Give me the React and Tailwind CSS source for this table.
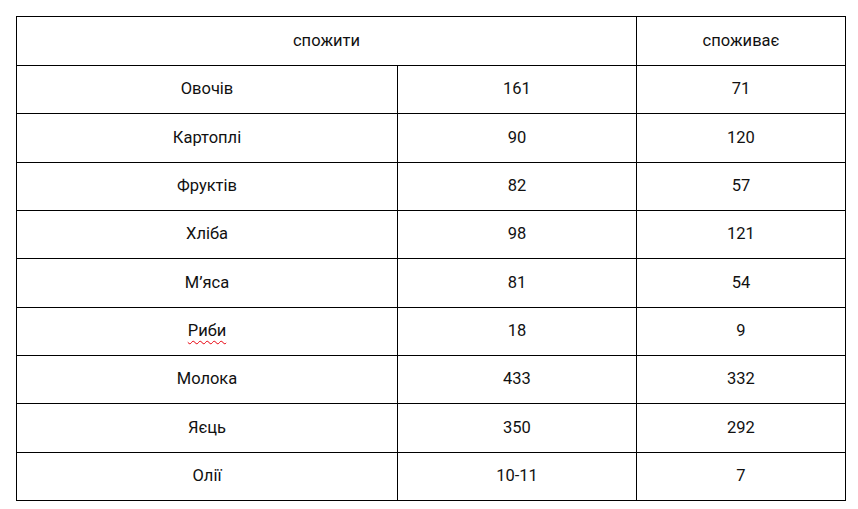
import React from 'react'

const rows = [
  ['Овочів', '161', '71'],
  ['Картоплі', '90', '120'],
  ['Фруктів', '82', '57'],
  ['Хліба', '98', '121'],
  ['М’яса', '81', '54'],
  ['Риби', '18', '9'],
  ['Молока', '433', '332'],
  ['Яєць', '350', '292'],
  ['Олії', '10-11', '7'],
]

export default function App() {
  return (
    <div className="min-h-screen bg-white pt-4 pl-4" style={{ fontFamily: 'Roboto, "Liberation Sans", sans-serif' }}>
      <table className="w-[829px] table-fixed border-collapse text-center text-[#111]">
        <colgroup>
          <col className="w-[381px]" />
          <col className="w-[239px]" />
          <col className="w-[209px]" />
        </colgroup>
        <thead>
          <tr className="h-[49px]">
            <th colSpan={2} className="border border-black text-[16.5px] font-normal">спожити</th>
            <th className="border border-black text-[16.5px] font-normal">споживає</th>
          </tr>
        </thead>
        <tbody className="text-[16.5px]">
          {rows.map((r, i) => (
            <tr key={i} className={i % 3 === 1 ? 'h-[49px]' : 'h-[48px]'}>
              <td className="border border-black">
                {r[0] === 'Риби' ? (
                  <span className="underline decoration-wavy decoration-red-600 decoration-1 underline-offset-4">{r[0]}</span>
                ) : r[0]}
              </td>
              <td className="border border-black">{r[1]}</td>
              <td className="border border-black">{r[2]}</td>
            </tr>
          ))}
        </tbody>
      </table>
    </div>
  )
}
